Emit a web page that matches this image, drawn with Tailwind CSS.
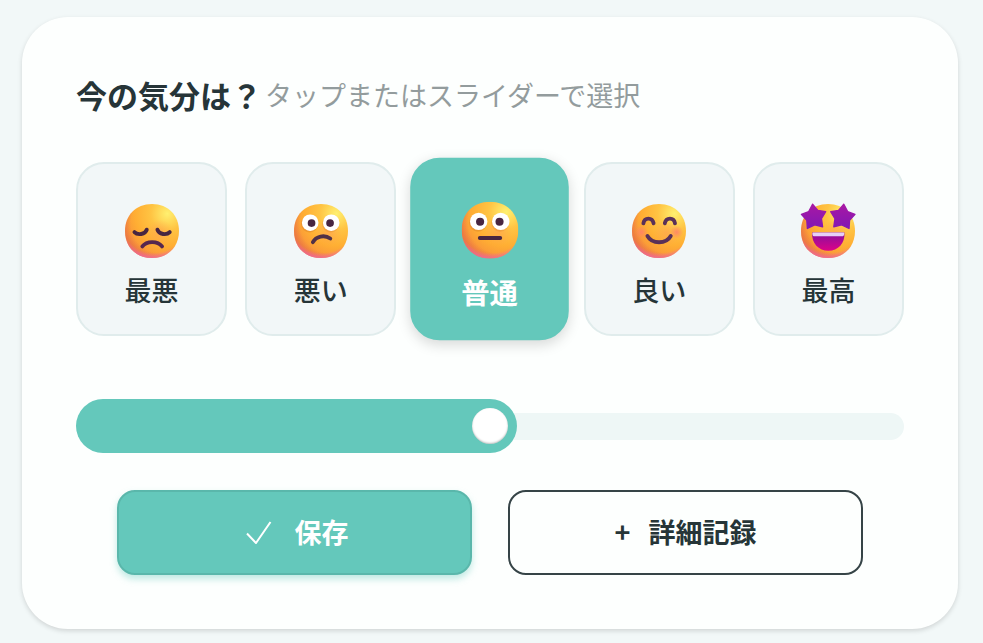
<!DOCTYPE html>
<html lang="ja">
<head>
    <meta charset="UTF-8">
    <meta name="viewport" content="width=device-width, initial-scale=1.0">
    <title>今の気分は？</title>
    <script src="https://cdn.jsdelivr.net/npm/@tailwindcss/browser@4"></script>
</head>
<body class="bg-[#f2f8f8] min-h-screen pt-[17px] pb-3 pl-[22px] pr-[25px] font-['Noto_Sans_CJK_JP',sans-serif] text-[#263538]">

    <!-- Shared emoji parts -->
    <svg class="absolute size-0" aria-hidden="true">
        <defs>
            <radialGradient id="base" gradientUnits="userSpaceOnUse" cx="24" cy="7" r="24">
                <stop offset="0" stop-color="#fff070"/>
                <stop offset="0.36" stop-color="#ffc443"/>
                <stop offset="0.7" stop-color="#ffae33"/>
                <stop offset="1" stop-color="#f8933a"/>
            </radialGradient>
            <radialGradient id="warm" gradientUnits="userSpaceOnUse" cx="20.5" cy="12" r="22">
                <stop offset="0.7" stop-color="#e0604b" stop-opacity="0"/>
                <stop offset="1" stop-color="#e0604b" stop-opacity="0.9"/>
            </radialGradient>
            <radialGradient id="pink" gradientUnits="userSpaceOnUse" cx="17" cy="10" r="21">
                <stop offset="0.82" stop-color="#f264b5" stop-opacity="0"/>
                <stop offset="1" stop-color="#f264b5" stop-opacity="0.9"/>
            </radialGradient>
            <radialGradient id="glow">
                <stop offset="0" stop-color="#ff9a55" stop-opacity="0.5"/>
                <stop offset="1" stop-color="#ff9a55" stop-opacity="0"/>
            </radialGradient>
            <radialGradient id="cheek">
                <stop offset="0" stop-color="#ff7d6e" stop-opacity="0.8"/>
                <stop offset="1" stop-color="#ff7d6e" stop-opacity="0"/>
            </radialGradient>
            <linearGradient id="star" x1="0" y1="0" x2="0" y2="1">
                <stop offset="0" stop-color="#a818a4"/>
                <stop offset="1" stop-color="#8118b4"/>
            </linearGradient>
            <linearGradient id="mouth" x1="0" y1="0" x2="0" y2="1">
                <stop offset="0" stop-color="#86109e"/>
                <stop offset="1" stop-color="#dd0388"/>
            </linearGradient>
            <path id="head" d="M16 30c8.5 0 14-6 14-14S24.5 2 16 2 2 8 2 16s5.5 14 14 14Z"/>
            <g id="face">
                <use href="#head" fill="url(#base)"/>
                <use href="#head" fill="url(#warm)"/>
                <use href="#head" fill="url(#pink)"/>
                <circle cx="20" cy="17" r="7" fill="url(#glow)"/>
            </g>
            <g id="eyes">
                <circle cx="10.1" cy="12.4" r="4.4" fill="#d9822b" fill-opacity="0.45"/>
                <circle cx="21" cy="12.4" r="4.4" fill="#d9822b" fill-opacity="0.3"/>
                <circle cx="10.4" cy="11.7" r="4.3" fill="#fff"/>
                <circle cx="21.3" cy="11.7" r="4.3" fill="#fff"/>
                <circle cx="11.1" cy="11.9" r="2" fill="#482641"/>
                <circle cx="20.7" cy="11.9" r="2" fill="#482641"/>
            </g>
            <path id="starEye" fill="url(#star)" stroke="url(#star)" stroke-width="0.7" stroke-linejoin="round" d="M2.2 7.4 6 5.9 8 2.1 10.75 5.3 14.8 6 12.6 9.6 13.2 13.8 9.1 12.8 5.3 14.7 5 10.4Z"/>
        </defs>
    </svg>

    <main class="bg-[#fdfffe] rounded-[46px] p-[54px] shadow-[0_2px_5px_rgba(0,0,0,0.14)]">
        <h1 class="flex items-center gap-[3px] leading-[47px] mb-11">
            <span class="text-[31px] font-bold">今の気分は？</span>
            <span class="text-[27px] font-normal text-[#939c9d]">タップまたはスライダーで選択</span>
        </h1>

        <!-- Mood buttons -->
        <div class="grid grid-cols-5 gap-[18px] mb-[63px]">
            <button type="button" data-mood="1" class="flex flex-col items-center h-[174px] pt-10 gap-[14px] rounded-[28px] border-2 border-[#e0ecec] bg-[#f2f7f8] text-[27px] leading-9 font-medium">
                <svg class="size-[54px] shrink-0" viewBox="2 2 28 28" aria-hidden="true">
                    <use href="#face"/>
                    <g fill="none" stroke="#482641" stroke-width="2" stroke-linecap="round">
                        <path d="M6.9 16.6c1.6 1.7 5.6 1.3 6.4-1.3M18.8 15.3c.8 2.6 4.8 3 6.4 1.3"/>
                        <path stroke="#56274f" d="M11 24c2.2-3 8-3 10.2 0"/>
                    </g>
                </svg>
                最悪
            </button>
            <button type="button" data-mood="2" class="flex flex-col items-center h-[174px] pt-10 gap-[14px] rounded-[28px] border-2 border-[#e0ecec] bg-[#f2f7f8] text-[27px] leading-9 font-medium">
                <svg class="size-[54px] shrink-0" viewBox="2 2 28 28" aria-hidden="true">
                    <use href="#face"/>
                    <use href="#eyes"/>
                    <path fill="none" stroke="#503047" stroke-width="2" stroke-linecap="round" d="M11.8 21.8c1.6-3.1 6-4 9-1.9"/>
                </svg>
                悪い
            </button>
            <button type="button" data-mood="3" aria-pressed="true" class="flex flex-col items-center h-[174px] pt-10 gap-[14px] rounded-[28px] border-2 border-[#64c8bb] bg-[#64c8bb] text-white text-[27px] leading-9 font-bold scale-105 shadow-[0_4px_12px_rgba(0,0,0,0.15)]">
                <svg class="size-[54px] shrink-0" viewBox="2 2 28 28" aria-hidden="true">
                    <use href="#face"/>
                    <use href="#eyes"/>
                    <path fill="none" stroke="#482641" stroke-width="2" stroke-linecap="round" d="M11 19.9h10"/>
                </svg>
                普通
            </button>
            <button type="button" data-mood="4" class="flex flex-col items-center h-[174px] pt-10 gap-[14px] rounded-[28px] border-2 border-[#e0ecec] bg-[#f2f7f8] text-[27px] leading-9 font-medium">
                <svg class="size-[54px] shrink-0" viewBox="2 2 28 28" aria-hidden="true">
                    <use href="#face"/>
                    <circle cx="6.9" cy="16.6" r="3.4" fill="url(#cheek)"/>
                    <circle cx="25.2" cy="16.6" r="3.4" fill="url(#cheek)"/>
                    <g fill="none" stroke="#5a3158" stroke-width="2" stroke-linecap="round">
                        <path d="M7.9 12c.6-3.2 4.6-3.2 5.3 0M19 12c.7-3.2 4.7-3.2 5.3 0"/>
                        <path d="M10 18.6c2.4 4.3 9.7 4.3 12.1 0"/>
                    </g>
                </svg>
                良い
            </button>
            <button type="button" data-mood="5" class="flex flex-col items-center h-[174px] pt-10 gap-[14px] rounded-[28px] border-2 border-[#e0ecec] bg-[#f2f7f8] text-[27px] leading-9 font-medium">
                <svg class="size-[54px] shrink-0 overflow-visible" viewBox="2 2 28 28" aria-hidden="true">
                    <use href="#face"/>
                    <use href="#starEye"/>
                    <use href="#starEye" transform="matrix(-1 0 0 1 32.2 0)"/>
                    <path fill="url(#mouth)" d="M7.8 16.8h16.7c.4 5.6-3.2 9.5-8.3 9.5s-8.8-3.9-8.4-9.5Z"/>
                    <path fill="#e6cff8" d="M8.3 16.8H24c.4 0 .5.3.4.7-.1.8-.4 1.2-1.1 1.2H9c-.7 0-1-.4-1.1-1.2 0-.4.1-.7.4-.7Z"/>
                </svg>
                最高
            </button>
        </div>

        <!-- Mood slider -->
        <div class="relative flex items-center h-[54px] mb-[37px]">
            <div class="w-full h-[27px] rounded-full bg-[#eef7f6]"></div>
            <div id="sliderFill" class="absolute inset-y-0 left-0 rounded-full bg-[#64c8bb]" style="width: calc(50% + 27px)"></div>
            <input id="moodSlider" type="range" min="1" max="5" value="3" aria-label="気分"
                   class="absolute inset-0 w-full h-full appearance-none bg-transparent cursor-pointer [&::-webkit-slider-thumb]:appearance-none [&::-webkit-slider-thumb]:size-9 [&::-webkit-slider-thumb]:rounded-full [&::-webkit-slider-thumb]:bg-white [&::-webkit-slider-thumb]:shadow-[inset_0_-1px_2px_rgba(0,0,0,0.25)]">
        </div>

        <!-- Actions -->
        <div class="grid grid-cols-2 gap-9 px-[41px] text-[27px] font-bold">
            <button type="button" class="flex items-center justify-center gap-[22px] h-[85px] rounded-[18px] border-2 border-[#5ab7ab] bg-[#64c8bb] text-white shadow-[0_4px_7px_rgba(100,200,187,0.4)]">
                <svg class="size-8" viewBox="0 0 32 32" fill="none" stroke="currentColor" stroke-width="2" stroke-linejoin="round" aria-hidden="true">
                    <path d="M6 16.5 15 26 29.5 5"/>
                </svg>
                保存
            </button>
            <button type="button" class="flex items-center justify-center gap-[18px] h-[85px] rounded-[18px] border-2 border-[#364447] bg-[#fdfffe]">
                <span>+</span>
                詳細記録
            </button>
        </div>
    </main>

    <script>
        // Keep the filled part of the track in step with the thumb
        const slider = document.getElementById('moodSlider');
        const fill = document.getElementById('sliderFill');

        slider.addEventListener('input', () => {
            const ratio = (slider.value - 1) / 4;
            fill.style.width = `calc(${ratio * 100}% + ${54 - ratio * 54}px)`;
        });
    </script>
</body>
</html>
